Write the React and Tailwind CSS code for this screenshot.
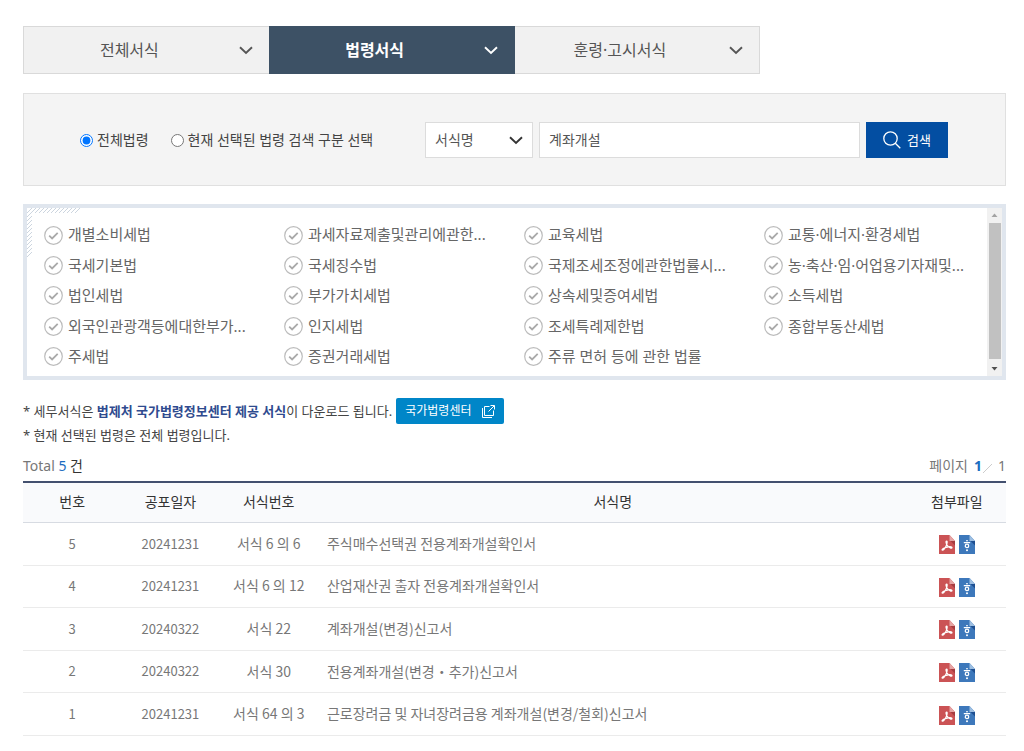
const tabs = [
  { label: "전체서식", active: false },
  { label: "법령서식", active: true },
  { label: "훈령·고시서식", active: false },
];

const laws = [
  "개별소비세법",
  "과세자료제출및관리에관한...",
  "교육세법",
  "교통·에너지·환경세법",
  "국세기본법",
  "국세징수법",
  "국제조세조정에관한법률시...",
  "농·축산·임·어업용기자재및...",
  "법인세법",
  "부가가치세법",
  "상속세및증여세법",
  "소득세법",
  "외국인관광객등에대한부가...",
  "인지세법",
  "조세특례제한법",
  "종합부동산세법",
  "주세법",
  "증권거래세법",
  "주류 면허 등에 관한 법률",
];

const rows = [
  { no: 5, date: "20241231", form: "서식 6 의 6", name: "주식매수선택권 전용계좌개설확인서" },
  { no: 4, date: "20241231", form: "서식 6 의 12", name: "산업재산권 출자 전용계좌개설확인서" },
  { no: 3, date: "20240322", form: "서식 22", name: "계좌개설(변경)신고서" },
  { no: 2, date: "20240322", form: "서식 30", name: "전용계좌개설(변경・추가)신고서" },
  { no: 1, date: "20241231", form: "서식 64 의 3", name: "근로장려금 및 자녀장려금용 계좌개설(변경/철회)신고서" },
];

function Chevron({ className }) {
  return (
    <svg className={className} width="14" height="9" viewBox="0 0 14 9" fill="none" stroke="currentColor" strokeWidth="1.900" aria-hidden="true">
      <path d="M1 1.300 7 7l6-5.700" />
    </svg>
  );
}

function CheckCircle() {
  return (
    <svg className="shrink-0" width="19" height="19" viewBox="0 0 19 19" fill="none" aria-hidden="true">
      <circle cx="9.500" cy="9.500" r="8.800" stroke="#bcbcbc" strokeWidth="1.200" />
      <path d="m5.200 9.700 2.900 2.700 5.600-5.500" stroke="#a9a9a9" strokeWidth="1.800" />
    </svg>
  );
}

function PdfIcon() {
  return (
    <svg width="16" height="19" viewBox="0 0 16 19" aria-hidden="true">
      <path d="M0 0h10.500L16 6v13H0z" fill="#cb5355" />
      <path d="M10.500 0 16 6h-5.500z" fill="#e6a4a4" />
      <path d="M11.500 6H16v4.500z" fill="#a53c40" />
      <path d="M7.700 6.200c-1.300 0-.5 2.200.2 3.600.9 1.700 2.200 3 3.700 3.300 1 .2 1.700-.4 1.200-.9-1.100-1-5.200-.3-7.500.8-1.500.7-2.700 1.500-2.100 2.100.9.700 3-2 4-4.300.700-1.600 1.500-4.600.5-4.600z" fill="none" stroke="#fff" strokeWidth="1.200" />
    </svg>
  );
}

function HwpIcon() {
  return (
    <svg width="16" height="19" viewBox="0 0 16 19" aria-hidden="true">
      <path d="M0 0h10.500L16 6v13H0z" fill="#3d78bb" />
      <path d="M10.500 0 16 6h-5.500z" fill="#9dbfe2" />
      <path d="M11.500 6H16v4.500z" fill="#1e4f91" />
      <path d="M7 5.800h2M4.800 7.600h6.400" stroke="#fff" strokeWidth="1.100" />
      <circle cx="8" cy="10.900" r="1.700" fill="none" stroke="#fff" strokeWidth="1.300" />
      <circle cx="8" cy="15.200" r="1" fill="#fff" />
    </svg>
  );
}

function CornerHatch() {
  const top = Array.from({ length: 13 }, (_, i) => i * 4);
  const side = Array.from({ length: 11 }, (_, i) => 9 + i * 4);
  return (
    <svg className="absolute top-0 left-0" width="54" height="54" viewBox="0 0 54 54" stroke="#ccd5df" strokeWidth="1" aria-hidden="true">
      {top.map((x) => (
        <path key={x} d={`M${x} 5l5-5`} />
      ))}
      {side.map((y) => (
        <path key={y} d={`M0 ${y}l5-5`} />
      ))}
    </svg>
  );
}

export default function App() {
  return (
    <main className="bg-white pt-[26px] pr-[18px] pb-4 pl-[23px] font-['Noto_Sans','Noto_Sans_CJK_KR',sans-serif] text-sm text-[#444]">
      <nav className="grid w-3/4 grid-cols-3">
        {tabs.map((tab) => (
          <button
            key={tab.label}
            type="button"
            className={
              tab.active
                ? "flex h-12 items-center border border-[#3d5165] bg-[#3d5165] pr-4 text-base font-bold text-white"
                : "flex h-12 items-center border border-[#d9d9d9] bg-[#f1f1f1] pr-4 text-base text-[#555] not-first:border-l-0 first:border-r-0"
            }
          >
            <span className="flex-1 pr-1">{tab.label}</span>
            <Chevron />
          </button>
        ))}
      </nav>

      <form className="mt-[19px] flex items-center border border-[#e0e0e0] bg-[#f4f4f4] pt-7 pr-[57px] pb-[27px] pl-14" onSubmit={(e) => e.preventDefault()}>
        <label className="flex items-center gap-1 whitespace-nowrap">
          <input type="radio" name="scope" defaultChecked className="size-[13px]" />
          전체법령
        </label>
        <label className="ml-[22px] flex items-center gap-1 whitespace-nowrap">
          <input type="radio" name="scope" className="size-[13px]" />
          현재 선택된 법령 검색 구분 선택
        </label>
        <div className="relative ml-auto w-[108px] shrink-0">
          <select aria-label="검색 구분" className="h-9 w-full appearance-none border border-[#dcdcdc] bg-white pl-[9px] text-sm text-[#555]">
            <option>서식명</option>
          </select>
          <Chevron className="pointer-events-none absolute top-[14px] right-[10px] text-[#333]" />
        </div>
        <input
          type="text"
          aria-label="검색어"
          defaultValue="계좌개설"
          className="ml-1.5 h-9 w-[321px] min-w-0 border border-[#dcdcdc] bg-white px-[9px] pb-0.5 text-sm text-[#555]"
        />
        <button type="submit" className="ml-1.5 flex h-9 w-[82px] shrink-0 items-center justify-center gap-[6px] bg-[#034ea2] text-[13px] text-white">
          <svg width="18" height="18" viewBox="0 0 18 18" fill="none" stroke="currentColor" strokeWidth="1.300" aria-hidden="true">
            <circle cx="7.500" cy="7.500" r="6.700" />
            <path d="m12.300 12.300 5 5" />
          </svg>
          <span>검색</span>
        </button>
      </form>

      <section className="relative mt-[18px] flex border-4 border-[#e0e6ee] bg-white">
        <CornerHatch />
        <ul className="grid h-[168px] flex-1 grid-cols-4 grid-rows-5 gap-x-[17px] pt-3 pb-1 pl-[17px] text-[15px] text-[#666]">
          {laws.map((law) => (
            <li key={law} className="flex min-w-0 items-center">
              <button type="button" className="flex items-center gap-[5px] whitespace-nowrap">
                <CheckCircle />
                {law}
              </button>
            </li>
          ))}
        </ul>
        <div className="flex w-[15px] shrink-0 flex-col items-center bg-[#f1f1f1]" aria-hidden="true">
          <svg width="15" height="15" viewBox="0 0 15 15">
            <path d="M4.500 9h6l-3-3.500z" fill="#a3a3a3" />
          </svg>
          <div className="w-3 flex-1 bg-[#c1c1c1]" />
          <svg width="15" height="17" viewBox="0 0 15 17">
            <path d="M4.500 8h6l-3 3.500z" fill="#505050" />
          </svg>
        </div>
      </section>

      <div className="mt-[18px] text-[13px]">
        <p className="flex items-center">
          <span>
            * 세무서식은 <strong className="font-bold text-[#2f4b8f]">법제처 국가법령정보센터 제공 서식</strong>이 다운로드 됩니다.
          </span>
          <a href="#law-center" className="ml-1 flex h-[26px] items-center gap-[11px] rounded-xs bg-[#0086c8] px-[9px] text-xs text-white">
            국가법령센터
            <svg width="13" height="13" viewBox="0 0 13 13" fill="none" stroke="currentColor" strokeWidth="1" aria-hidden="true">
              <path d="M7.500 1.500h-5v9h9v-5M8.500.5h4v4M12.300.7 6.500 6.500M.5 3v9.500H10" />
            </svg>
          </a>
        </p>
        <p className="mt-px leading-5">* 현재 선택된 법령은 전체 법령입니다.</p>
      </div>

      <div className="mt-[11px] flex justify-between leading-5 text-[#777]">
        <p>
          Total <span className="text-[#1b6cc0]">5</span> <span className="text-[#333]">건</span>
        </p>
        <p className="flex items-center">
          페이지<strong className="ml-1.5 font-bold text-[#1b6cc0]">1</strong>
          <svg className="mt-1" width="12" height="12" viewBox="0 0 12 12" aria-label="/">
            <path d="m1 11 9-9" stroke="#ccc" />
          </svg>
          <span className="ml-1">1</span>
        </p>
      </div>

      <table className="mt-[5px] h-[255px] w-full table-fixed border-separate border-spacing-0 border-t-2 border-[#43506f] font-['Noto_Sans_CJK_KR',sans-serif]">
        <colgroup>
          <col className="w-1/10" />
          <col className="w-1/10" />
          <col className="w-1/10" />
          <col className="w-3/5" />
          <col className="w-1/10" />
        </colgroup>
        <thead>
          <tr className="h-10 bg-[#f9fafc] text-[#333]">
            {["번호", "공포일자", "서식번호", "서식명", "첨부파일"].map((head) => (
              <th key={head} scope="col" className="border-b border-[#d7dbe2] pb-1 font-normal">
                {head}
              </th>
            ))}
          </tr>
        </thead>
        <tbody>
          {rows.map((row) => (
            <tr key={row.no} className="text-center text-[#777]">
              <td className="border-b border-[#ebebeb] text-[13px]">{row.no}</td>
              <td className="border-b border-[#ebebeb] text-[13px]">{row.date}</td>
              <td className="border-b border-[#ebebeb] pb-0.5 whitespace-nowrap">{row.form}</td>
              <td className="border-b border-[#ebebeb] pb-0.5 pl-[9px] text-left">{row.name}</td>
              <td className="border-b border-[#ebebeb] pt-0.5">
                <div className="flex justify-center gap-1">
                  <a href="#pdf" aria-label="PDF 다운로드">
                    <PdfIcon />
                  </a>
                  <a href="#hwp" aria-label="한글 다운로드">
                    <HwpIcon />
                  </a>
                </div>
              </td>
            </tr>
          ))}
        </tbody>
      </table>
    </main>
  );
}
